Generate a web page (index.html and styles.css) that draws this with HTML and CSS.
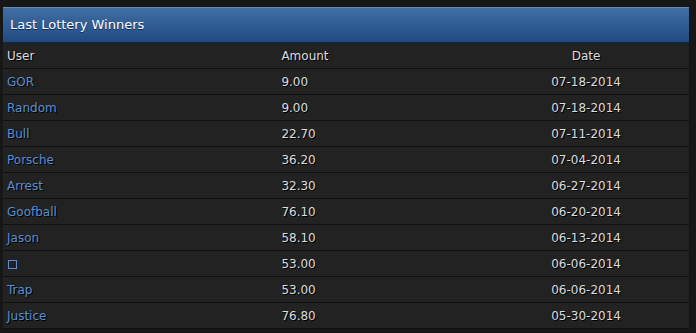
FILE: index.html
```html
<!DOCTYPE html>
<html>
<head>
<meta charset="utf-8">
<link rel="stylesheet" href="styles.css">
</head>
<body>
<div class="panel">
  <div class="panel-head">Last Lottery Winners</div>
  <table class="winners">
    <colgroup><col class="c-user"><col class="c-amt"><col class="c-date"></colgroup>
    <thead>
      <tr><th class="t-user">User</th><th class="t-amt">Amount</th><th class="t-date">Date</th></tr>
    </thead>
    <tbody>
      <tr><td class="user">GOR</td><td class="amt">9.00</td><td class="date">07-18-2014</td></tr>
      <tr><td class="user">Random</td><td class="amt">9.00</td><td class="date">07-18-2014</td></tr>
      <tr><td class="user">Bull</td><td class="amt">22.70</td><td class="date">07-11-2014</td></tr>
      <tr><td class="user">Porsche</td><td class="amt">36.20</td><td class="date">07-04-2014</td></tr>
      <tr><td class="user">Arrest</td><td class="amt">32.30</td><td class="date">06-27-2014</td></tr>
      <tr><td class="user">Goofball</td><td class="amt">76.10</td><td class="date">06-20-2014</td></tr>
      <tr><td class="user">Jason</td><td class="amt">58.10</td><td class="date">06-13-2014</td></tr>
      <tr><td class="user"><span class="box"></span></td><td class="amt">53.00</td><td class="date">06-06-2014</td></tr>
      <tr><td class="user">Trap</td><td class="amt">53.00</td><td class="date">06-06-2014</td></tr>
      <tr><td class="user">Justice</td><td class="amt">76.80</td><td class="date">05-30-2014</td></tr>
    </tbody>
  </table>
</div>
</body>
</html>
```
FILE: styles.css
```css
html, body {
  margin: 0;
  padding: 0;
  background: #171717;
}
body {
  padding: 7px 6px 0 3px;
  font-family: "DejaVu Sans", Verdana, sans-serif;
  font-size: 12px;
}
.panel {
  background: #222222;
  border-right: 1px solid #141414;
}
.panel-head {
  height: 34px;
  line-height: 34px;
  padding-left: 7px;
  color: #ffffff;
  font-size: 13px;
  background: linear-gradient(#416ea3, #1f4b82);
  border-top: 1px solid #6288b6;
  border-bottom: 1px solid #0d2350;
  text-shadow: 0 1px 0 #0e2a55;
}
.winners {
  width: 100%;
  border-collapse: collapse;
  table-layout: fixed;
}
.c-user { width: 40%; }
.c-amt { width: 30%; }
.c-date { width: 30%; }
.winners th, .winners td {
  height: 25px;
  padding: 0 4px;
  font-weight: normal;
  color: #dcdcdc;
  text-shadow: 1px 1px 0 #000;
  border-top: 1px solid #333333;
  border-bottom: 1px solid #0f0f0f;
  white-space: nowrap;
}
.winners thead th { border-top: none; height: 25px; }
.winners .t-user, .winners .user, .winners .t-amt, .winners .amt { text-align: left; }
.winners .t-date, .winners .date { text-align: center; }
.winners td.user { color: #5b8ed0; }
.box {
  display: inline-block;
  width: 7px;
  height: 7px;
  border: 1.5px solid #5b8ed0;
  vertical-align: -1px;
  margin-left: 1px;
}
```
